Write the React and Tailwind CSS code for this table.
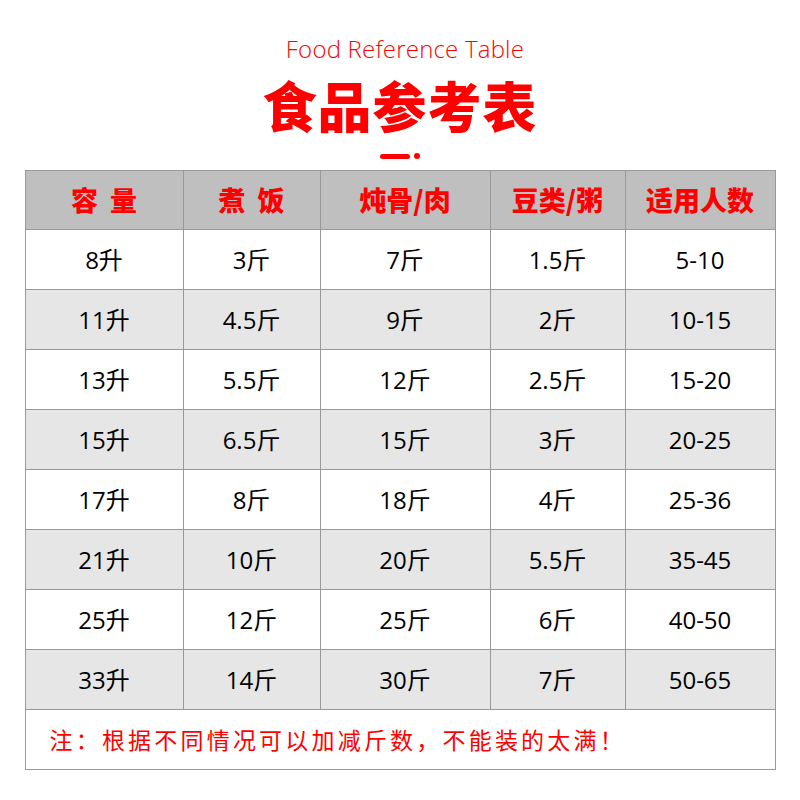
const rows = [
  ["8升", "3斤", "7斤", "1.5斤", "5-10"],
  ["11升", "4.5斤", "9斤", "2斤", "10-15"],
  ["13升", "5.5斤", "12斤", "2.5斤", "15-20"],
  ["15升", "6.5斤", "15斤", "3斤", "20-25"],
  ["17升", "8斤", "18斤", "4斤", "25-36"],
  ["21升", "10斤", "20斤", "5.5斤", "35-45"],
  ["25升", "12斤", "25斤", "6斤", "40-50"],
  ["33升", "14斤", "30斤", "7斤", "50-65"],
];

const heads = [["容", "量"], ["煮", "饭"], ["炖骨/肉"], ["豆类/粥"], ["适用人数"]];

export default function App() {
  return (
    <div className="w-[800px] h-[800px] bg-white flex flex-col items-center font-['Noto_Sans_CJK_SC',sans-serif]">
      <div className="mt-[34px] ml-[10px] h-[30px] text-[24px] leading-[30px] text-[#ff0000] font-['Open_Sans','Noto_Sans_CJK_SC',sans-serif] font-light tracking-[0.2px]">
        Food Reference Table
      </div>
      <div className="mt-[13px] h-[56px] text-[54px] leading-[56px] font-black text-[#ff0000] tracking-[1px]">
        食品参考表
      </div>
      <div className="mt-[20px] flex items-center gap-[4px]">
        <div className="w-[30px] h-[5px] rounded-full bg-[#ff0000]" />
        <div className="w-[6px] h-[6px] rounded-full bg-[#ff0000]" />
      </div>

      {/* table */}
      <div className="mt-[11px] w-[751px] border-l border-t border-[#999999]">
        <div className="grid grid-cols-[158px_137px_170px_135px_150px]">
          {heads.map((h) => (
            <div
              key={h.join("")}
              className="h-[59px] bg-[#bfbfbf] border-r border-b border-[#999999] flex items-center justify-center gap-[12px] text-[27px] font-black text-[#ff0000]"
            >
              {h.map((t) => (
                <span key={t}>{t}</span>
              ))}
            </div>
          ))}
          {rows.map((r, i) =>
            r.map((c, j) => (
              <div
                key={i + "-" + j}
                className={
                  "h-[60px] border-r border-b border-[#999999] flex items-center justify-center text-[24px] text-black font-['Open_Sans','Noto_Sans_CJK_SC',sans-serif] " +
                  (i % 2 === 1 ? "bg-[#e6e6e6]" : "bg-white")
                }
              >
                {c}
              </div>
            ))
          )}
        </div>
        <div className="h-[60px] border-r border-b border-[#999999] flex items-center pl-[24px] text-[23px] text-[#ff0000] tracking-[3.2px]">
          注：根据不同情况可以加减斤数，不能装的太满！
        </div>
      </div>
    </div>
  );
}
